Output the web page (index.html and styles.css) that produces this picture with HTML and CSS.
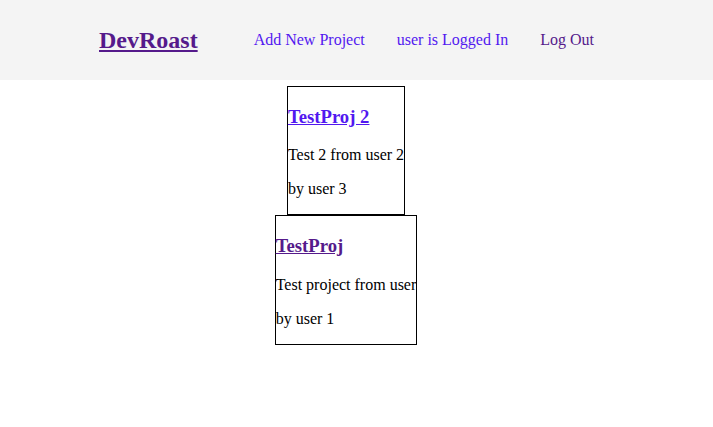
FILE: index.html
```html
<!DOCTYPE html>
<html>
<head>
<meta charset="utf-8">
<link rel="stylesheet" href="styles.css">
</head>
<body>
<header class="topbar">
  <a class="brand" href="#">DevRoast</a>
  <nav class="nav">
    <a class="nav-link" href="#">Add New Project</a>
    <a class="nav-link" href="#">user is Logged In</a>
    <a class="nav-link visited" href="#">Log Out</a>
  </nav>
</header>
<main class="projects">
  <div class="card">
    <h3 class="card-title"><a class="title-link" href="#">TestProj 2</a></h3>
    <p class="card-text">Test 2 from user 2</p>
    <p class="card-text">by user 3</p>
  </div>
  <div class="card">
    <h3 class="card-title"><a class="title-link visited" href="#">TestProj</a></h3>
    <p class="card-text">Test project from user</p>
    <p class="card-text">by user 1</p>
  </div>
</main>
</body>
</html>
```
FILE: styles.css
```css
html, body {
  margin: 0;
  padding: 0;
  background: #ffffff;
  font-family: "Liberation Serif", "Times New Roman", serif;
  font-size: 16px;
  color: #000;
}
.topbar {
  height: 80px;
  background: #f4f4f4;
  display: flex;
  align-items: center;
  padding-left: 99px;
  box-sizing: border-box;
}
.brand {
  font-size: 24px;
  font-weight: bold;
  color: #551a8b;
  text-decoration: underline;
}
.nav {
  display: flex;
  gap: 32px;
  margin-left: 56px;
}
.nav-link {
  color: #5218f0;
  text-decoration: none;
}
.nav-link.visited {
  color: #551a8b;
}
.projects {
  display: flex;
  flex-direction: column;
  align-items: center;
  padding-top: 6px;
  padding-right: 21px;
}
.card {
  border: 1px solid #000;
  width: fit-content;
}
.card-title {
  font-size: 18.72px;
  font-weight: bold;
  margin: 18.72px 0;
}
.title-link {
  color: #5218f0;
  text-decoration: underline;
}
.title-link.visited {
  color: #551a8b;
}
.card-text {
  margin: 16px 0;
  white-space: nowrap;
}
```
